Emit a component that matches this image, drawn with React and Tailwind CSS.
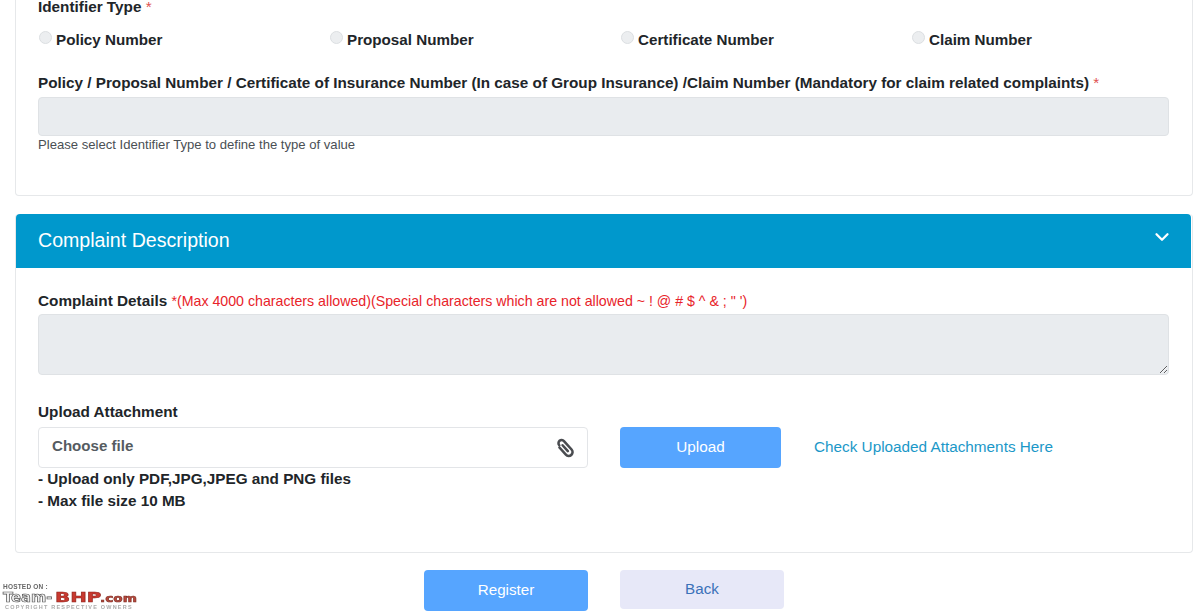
import React from "react";
import { ChevronDown } from "lucide-react";

const Radio = ({ label }) => (
  <label className="flex items-center h-[20px]">
    <input type="radio" disabled className="appearance-none w-[13px] h-[13px] rounded-full border border-[#dcdfe2] bg-[#eceef0] ml-[1px] mt-[-5px]" />
    <span className="ml-[4px] text-[15.2px] font-bold text-[#212529]">{label}</span>
  </label>
);

export default function App() {
  return (
    <div className="relative h-[612px] w-[1200px] overflow-hidden bg-white font-['Liberation_Sans',Arial,sans-serif] text-[#212529]">
      <div className="px-[15px] pr-[7px]">
        {/* Top card */}
        <section className="mt-[-20px] h-[216px] rounded-b-[4px] border border-t-0 border-[#e6e8ea] px-[22px] pt-[19px]">
          <div className="text-[15.3px] leading-[16px] font-bold">
            Identifier Type <span className="font-normal text-[#e0524f]">*</span>
          </div>
          <div className="mt-[15px] grid w-[1164px] grid-cols-4">
            <Radio label="Policy Number" />
            <Radio label="Proposal Number" />
            <Radio label="Certificate Number" />
            <Radio label="Claim Number" />
          </div>
          <div className="mt-[25px] text-[15.28px] leading-[16px] font-bold whitespace-nowrap">
            Policy / Proposal Number / Certificate of Insurance Number (In case of Group Insurance) /Claim Number (Mandatory for claim related complaints) <span className="font-normal text-[#e0524f]">*</span>
          </div>
          <input disabled className="mt-[6px] block h-[39px] w-[1131px] rounded-[4px] border border-[#dfe2e5] bg-[#e9ecef]" />
          <div className="mt-[1px] text-[13.1px] leading-[16px] text-[#4a4f54]">Please select Identifier Type to define the type of value</div>
        </section>

        {/* Complaint card */}
        <section className="mt-[18px] h-[339px] rounded-[4px] border border-t-0 border-[#e6e8ea]">
          <header className="mr-[1px] flex h-[54px] items-center justify-between rounded-t-[4px] bg-[#0098cc] pl-[22px] pr-[18px] text-white">
            <span className="text-[19.6px]">Complaint Description</span>
            <ChevronDown className="w-[22px] h-[22px] mt-[-9px]" strokeWidth={2.5} />
          </header>
          <div className="px-[22px]">
            <div className="mt-[25px] text-[14.2px] leading-[16px] whitespace-nowrap">
              <span className="font-bold text-[15.3px]">Complaint Details </span>
              <span className="text-[#e8232a]">*(Max 4000 characters allowed)(Special characters which are not allowed ~ ! @ # $ ^ &amp; ; " ')</span>
            </div>
            <textarea disabled className="mt-[5px] block h-[61px] w-[1131px] resize-y rounded-[4px] border border-[#dfe2e5] bg-[#e9ecef]" />
            <div className="mt-[29px] text-[15.3px] leading-[16px] font-bold">Upload Attachment</div>
            <div className="mt-[7px] flex items-start">
              <div className="flex h-[41px] w-[550px] items-center justify-between rounded-[4px] border border-[#e3e5e8] bg-white pl-[13px] pr-[11px]">
                <span className="mt-[-2px] text-[15.1px] font-bold text-[#555b61]">Choose file</span>
                <svg viewBox="0 0 24 24" className="h-[21px] w-[21px] mt-[1px]" fill="none" stroke="#4a4c50" strokeWidth="2.9" strokeLinecap="round" strokeLinejoin="round">
                  <g transform="rotate(-42 12 12)">
                    <path d="M12 7v9M7.6 6.5v11a4.4 4.4 0 0 0 8.8 0V4.5a3.6 3.6 0 0 0-7.2 0" />
                  </g>
                </svg>
              </div>
              <button className="ml-[32px] h-[41px] w-[161px] rounded-[4px] bg-[#56a5ff] text-[15.3px] text-white">Upload</button>
              <a className="ml-[33px] mt-[10px] text-[15.3px] leading-[20px] text-[#1b98c8]">Check Uploaded Attachments Here</a>
            </div>
            <div className="mt-0 text-[15.27px] leading-[22px] font-bold">
              <div>- Upload only PDF,JPG,JPEG and PNG files</div>
              <div>- Max file size 10 MB</div>
            </div>
          </div>
        </section>

        {/* Buttons */}
        <div className="mt-[17px] flex pl-[409px]">
          <button className="h-[41px] w-[164px] rounded-[4px] bg-[#56a5ff] text-[15.2px] text-white">Register</button>
          <button className="ml-[32px] h-[39px] w-[164px] rounded-[4px] bg-[#e7e8f8] text-[15.2px] text-[#3b71b9]">Back</button>
        </div>
      </div>

      {/* Watermark */}
      <div className="absolute left-[3px] top-[583px] w-[140px] leading-none blur-[0.4px] whitespace-nowrap">
        <div className="text-[6.5px] leading-[7px] font-bold tracking-[0.2px] text-[#666]">HOSTED ON :</div>
        <div className="mt-[1px] flex items-baseline font-['DejaVu_Sans',sans-serif] leading-[12px] font-bold">
          <span className="inline-block w-[52px] origin-left scale-x-[1.05] text-[14px] text-[#f0f0f0] [-webkit-text-stroke:0.7px_#555]">Team-</span>
          <span className="inline-block w-[45px] origin-left scale-x-[1.42] text-[14px] text-[#c8392f] [-webkit-text-stroke:0.5px_#8a1f18]">BHP</span>
          <span className="inline-block w-[37px] origin-left scale-x-[1.37] text-[10px] text-[#b8483c] [-webkit-text-stroke:0.5px_#7a2a20]">.com</span>
        </div>
        <div className="mt-[-1px] ml-[2px] text-[5.5px] leading-[6px] font-bold tracking-[1.2px] text-[#aaa] uppercase">copyright respective owners</div>
      </div>
    </div>
  );
}
